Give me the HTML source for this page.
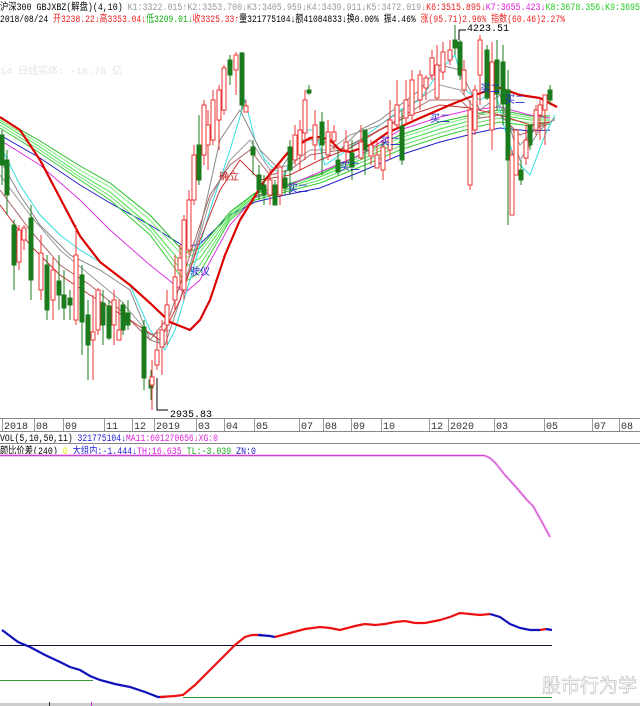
<!DOCTYPE html>
<html><head><meta charset="utf-8"><style>
html,body{margin:0;padding:0;background:#fff;width:640px;height:706px;overflow:hidden}
svg text{font-family:"Liberation Mono","Noto Sans CJK SC",monospace;font-size:10px}
</style></head><body>
<svg width="640" height="706" viewBox="0 0 640 706" xmlns="http://www.w3.org/2000/svg">
<rect width="640" height="706" fill="#fff"/>
<!-- header -->
<text x="0" y="10" fill="#000" textLength="640" lengthAdjust="spacingAndGlyphs">沪深300 GBJXBZ(解盘)(4,10) <tspan fill="#999">K1:3322.015↑K2:3353.700↓K3:3405.959↓K4:3439.911↓K5:3472.019↓</tspan><tspan fill="#e22">K6:3515.895↓</tspan><tspan fill="#d2d">K7:3655.423↓</tspan><tspan fill="#2c2">K8:3678.356↓K9:3695</tspan></text>
<text x="0" y="22" fill="#000" textLength="565" lengthAdjust="spacingAndGlyphs">2018/08/24 <tspan fill="#e22">开3238.22↓高3353.04↓</tspan><tspan fill="#1a1">低3209.01↓</tspan><tspan fill="#e22">收3325.33↑</tspan>量321775104↓额41084833↓换0.00% 振4.46% <tspan fill="#e22">涨(95.71)2.96% 指数(60.46)2.27%</tspan></text>
<text x="0" y="74" fill="#e4e4e4">14 日线实体: -18.78 亿</text>
<polyline points="459,40 459,30 466,30" fill="none" stroke="#000" stroke-width="1"/>
<text x="467" y="31" fill="#000">4223.51</text>
<polyline points="157,378 157,410 168,410" fill="none" stroke="#000"/>
<text x="170" y="417" fill="#000">2935.83</text>

<!-- ribbons -->
<g fill="none" stroke-width="1">
<polyline stroke="#22c" points="0,135 40,158 80,185 110,203 150,225 185,247 200,244 230,215 255,202 285,195 320,188 360,172 400,155 440,142 480,132 500,128 530,131 550,130"/>
<polyline stroke="#3c3" points="0,128 40,153 80,180 110,200 150,235 185,282 200,272 230,220 255,200 285,192 320,183 360,167 400,150 440,137 480,126 500,122 530,126 550,124"/>
<polyline stroke="#6d6" points="0,125 40,150 80,177 110,196 150,230 185,275 200,265 230,218 255,198 285,190 320,180 360,163 400,146 440,133 480,122 500,118 530,123 550,122"/>
<polyline stroke="#4d4" points="0,122 40,147 80,174 110,192 150,226 185,267 200,258 230,216 255,196 285,188 320,177 360,160 400,142 440,129 480,118 500,115 530,120 550,120"/>
<polyline stroke="#7e7" points="0,120 40,144 80,170 110,187 150,220 185,258 200,252 230,214 255,194 285,186 320,175 360,157 400,138 440,125 480,115 500,112 530,118 550,118"/>
<polyline stroke="#2b2" points="0,118 40,141 80,166 110,183 150,215 185,253 200,248 230,212 255,193 285,185 320,174 360,155 400,135 440,122 480,113 500,110 530,116 550,116"/>
<polyline stroke="#d3d" points="0,140 40,165 80,200 110,230 150,265 185,293 200,280 230,225 255,197 285,187 320,172 360,155 400,130 440,117 470,110 500,107 530,115 550,118"/>
<polyline stroke="#3dd" points="0,145 20,185 40,215 60,235 80,250 100,262 130,285 150,330 165,350 175,330 190,280 210,210 230,150 245,100 255,140 265,160 275,170 285,175 300,130 315,130 325,165 340,155 360,140 380,125 400,110 420,100 440,70 455,55 465,90 480,100 495,90 505,130 515,160 530,175 545,135 555,115"/>
<polyline stroke="#888" points="0,160 20,195 40,225 70,255 100,270 130,290 150,340 165,345 180,300 200,230 220,140 240,110 260,150 280,170 300,140 320,140 340,150 360,130 380,120 400,105 420,90 440,65 460,70 480,110 500,95 520,160 540,130 555,118"/>
<polyline stroke="#999" points="0,175 30,215 60,250 90,275 120,300 150,335 170,330 190,270 210,200 230,160 250,140 270,170 290,165 310,150 330,150 350,135 380,125 410,105 440,85 460,90 480,115 500,105 520,145 540,125 555,120"/>
<polyline stroke="#a66" points="0,190 30,230 60,265 90,285 120,310 150,340 170,315 190,255 210,195 230,165 250,150 270,175 290,170 310,155 340,150 370,135 400,118 430,100 460,100 480,118 500,115 520,135 545,125"/>
<polyline stroke="#c33" points="0,205 30,245 60,275 90,295 130,320 160,340 180,300 200,240 220,190 240,160 260,180 290,175 320,160 350,148 380,130 410,115 440,105 470,108 500,115 530,125 550,122"/>
<polyline stroke="#d00" stroke-width="2.2" points="0,117 20,130 40,160 60,198 80,236 100,262 130,285 150,303 170,322 190,330 200,320 210,300 225,255 240,220 265,180 290,150 310,138 320,137 330,140 340,150 350,152 370,145 387,133 420,118 450,105 470,97 497,87 520,95 540,98 557,107"/>
</g>

<g>
<g stroke="#1b7a1b" fill="#1b7a1b">
<line x1="2" y1="130" x2="2" y2="185"/><rect x="0" y="135" width="4" height="30"/>
<line x1="7" y1="150" x2="7" y2="215"/><rect x="5" y="160" width="4" height="35"/>
<line x1="14" y1="220" x2="14" y2="290"/><rect x="12" y="225" width="4" height="40"/>
<line x1="31" y1="205" x2="31" y2="300"/><rect x="29" y="218" width="4" height="62"/>
<line x1="47" y1="255" x2="47" y2="320"/><rect x="45" y="265" width="4" height="45"/>
<line x1="59" y1="255" x2="59" y2="310"/><rect x="57" y="281" width="4" height="14"/>
<line x1="64" y1="270" x2="64" y2="320"/><rect x="62" y="295" width="4" height="13"/>
<line x1="70" y1="290" x2="70" y2="320"/><rect x="68" y="298" width="4" height="7"/>
<line x1="82" y1="265" x2="82" y2="355"/><rect x="80" y="275" width="4" height="47"/>
<line x1="88" y1="300" x2="88" y2="380"/><rect x="86" y="315" width="4" height="30"/>
<line x1="103" y1="290" x2="103" y2="345"/><rect x="101" y="303" width="4" height="22"/>
<line x1="109" y1="300" x2="109" y2="340"/><rect x="107" y="306" width="4" height="32"/>
<line x1="123" y1="302" x2="123" y2="335"/><rect x="121" y="305" width="4" height="25"/>
<line x1="128" y1="300" x2="128" y2="330"/><rect x="126" y="313" width="4" height="12"/>
<line x1="144" y1="320" x2="144" y2="390"/><rect x="142" y="327" width="4" height="51"/>
<line x1="151" y1="370" x2="151" y2="400"/><rect x="149" y="380" width="4" height="8"/>
<line x1="199" y1="115" x2="199" y2="185"/><rect x="197" y="145" width="4" height="35"/>
<line x1="230" y1="55" x2="230" y2="85"/><rect x="228" y="60" width="4" height="15"/>
<line x1="242" y1="52" x2="242" y2="110"/><rect x="240" y="53" width="4" height="52"/>
<line x1="253" y1="140" x2="253" y2="175"/><rect x="251" y="147" width="4" height="8"/>
<line x1="259" y1="165" x2="259" y2="200"/><rect x="257" y="175" width="4" height="15"/>
<line x1="264" y1="175" x2="264" y2="205"/><rect x="262" y="185" width="4" height="10"/>
<line x1="275" y1="180" x2="275" y2="205"/><rect x="273" y="185" width="4" height="20"/>
<line x1="285" y1="170" x2="285" y2="195"/><rect x="283" y="178" width="4" height="10"/>
<line x1="290" y1="140" x2="290" y2="195"/><rect x="288" y="147" width="4" height="23"/>
<line x1="309" y1="85" x2="309" y2="95"/><rect x="307" y="90" width="4" height="3"/>
<line x1="322" y1="112" x2="322" y2="175"/><rect x="320" y="122" width="4" height="23"/>
<line x1="338" y1="150" x2="338" y2="175"/><rect x="336" y="160" width="4" height="12"/>
<line x1="352" y1="140" x2="352" y2="180"/><rect x="350" y="153" width="4" height="14"/>
<line x1="365" y1="130" x2="365" y2="175"/><rect x="363" y="130" width="4" height="20"/>
<line x1="402" y1="110" x2="402" y2="165"/><rect x="400" y="126" width="4" height="34"/>
<line x1="455" y1="25" x2="455" y2="55"/><rect x="453" y="40" width="4" height="8"/>
<line x1="460" y1="40" x2="460" y2="80"/><rect x="458" y="42" width="4" height="33"/>
<line x1="487" y1="45" x2="487" y2="100"/><rect x="485" y="50" width="4" height="48"/>
<line x1="497" y1="40" x2="497" y2="110"/><rect x="495" y="60" width="4" height="34"/>
<line x1="503" y1="45" x2="503" y2="125"/><rect x="501" y="62" width="4" height="42"/>
<line x1="508" y1="70" x2="508" y2="225"/><rect x="506" y="90" width="4" height="70"/>
<line x1="521" y1="160" x2="521" y2="185"/><rect x="519" y="170" width="4" height="10"/>
<line x1="530" y1="125" x2="530" y2="150"/><rect x="528" y="125" width="4" height="20"/>
<line x1="550" y1="85" x2="550" y2="105"/><rect x="548" y="90" width="4" height="10"/>
</g>
<g stroke="#e33" fill="#fff">
<line x1="19" y1="225" x2="19" y2="270"/><rect x="17" y="230" width="4" height="32"/>
<line x1="24" y1="225" x2="24" y2="250"/><rect x="22" y="228" width="4" height="12"/>
<line x1="41" y1="235" x2="41" y2="300"/><rect x="39" y="253" width="4" height="37"/>
<line x1="53" y1="258" x2="53" y2="320"/><rect x="51" y="270" width="4" height="30"/>
<line x1="76" y1="225" x2="76" y2="325"/><rect x="74" y="255" width="4" height="65"/>
<line x1="93" y1="295" x2="93" y2="380"/><rect x="91" y="332" width="4" height="8"/>
<line x1="98" y1="288" x2="98" y2="335"/><rect x="96" y="290" width="4" height="40"/>
<line x1="114" y1="290" x2="114" y2="345"/><rect x="112" y="300" width="4" height="25"/>
<line x1="119" y1="300" x2="119" y2="340"/><rect x="117" y="330" width="4" height="10"/>
<line x1="152" y1="360" x2="152" y2="410"/><rect x="150" y="377" width="4" height="8"/>
<line x1="157" y1="330" x2="157" y2="370"/><rect x="155" y="350" width="4" height="15"/>
<line x1="162" y1="320" x2="162" y2="375"/><rect x="160" y="330" width="4" height="17"/>
<line x1="167" y1="290" x2="167" y2="345"/><rect x="165" y="305" width="4" height="20"/>
<line x1="175" y1="255" x2="175" y2="310"/><rect x="173" y="277" width="4" height="23"/>
<line x1="180" y1="245" x2="180" y2="290"/><rect x="178" y="258" width="4" height="12"/>
<line x1="184" y1="215" x2="184" y2="300"/><rect x="182" y="220" width="4" height="70"/>
<line x1="189" y1="190" x2="189" y2="255"/><rect x="187" y="200" width="4" height="50"/>
<line x1="194" y1="145" x2="194" y2="205"/><rect x="192" y="155" width="4" height="45"/>
<line x1="204" y1="100" x2="204" y2="165"/><rect x="202" y="105" width="4" height="50"/>
<line x1="208" y1="110" x2="208" y2="170"/><rect x="206" y="125" width="4" height="20"/>
<line x1="213" y1="90" x2="213" y2="145"/><rect x="211" y="100" width="4" height="40"/>
<line x1="219" y1="85" x2="219" y2="150"/><rect x="217" y="90" width="4" height="30"/>
<line x1="224" y1="65" x2="224" y2="115"/><rect x="222" y="68" width="4" height="42"/>
<line x1="236" y1="52" x2="236" y2="95"/><rect x="234" y="55" width="4" height="15"/>
<line x1="246" y1="100" x2="246" y2="112"/><rect x="244" y="106" width="4" height="6"/>
<line x1="270" y1="170" x2="270" y2="205"/><rect x="268" y="180" width="4" height="15"/>
<line x1="280" y1="165" x2="280" y2="205"/><rect x="278" y="167" width="4" height="28"/>
<line x1="295" y1="125" x2="295" y2="165"/><rect x="293" y="135" width="4" height="25"/>
<line x1="300" y1="120" x2="300" y2="170"/><rect x="298" y="130" width="4" height="25"/>
<line x1="305" y1="90" x2="305" y2="160"/><rect x="303" y="100" width="4" height="33"/>
<line x1="315" y1="110" x2="315" y2="160"/><rect x="313" y="125" width="4" height="20"/>
<line x1="328" y1="120" x2="328" y2="160"/><rect x="326" y="132" width="4" height="23"/>
<line x1="334" y1="125" x2="334" y2="150"/><rect x="332" y="132" width="4" height="9"/>
<line x1="346" y1="130" x2="346" y2="165"/><rect x="344" y="142" width="4" height="8"/>
<line x1="361" y1="125" x2="361" y2="160"/><rect x="359" y="142" width="4" height="16"/>
<line x1="371" y1="140" x2="371" y2="165"/><rect x="369" y="145" width="4" height="11"/>
<line x1="377" y1="140" x2="377" y2="168"/><rect x="375" y="155" width="4" height="13"/>
<line x1="383" y1="140" x2="383" y2="180"/><rect x="381" y="147" width="4" height="23"/>
<line x1="390" y1="100" x2="390" y2="160"/><rect x="388" y="120" width="4" height="30"/>
<line x1="397" y1="80" x2="397" y2="130"/><rect x="395" y="105" width="4" height="20"/>
<line x1="406" y1="80" x2="406" y2="125"/><rect x="404" y="100" width="4" height="18"/>
<line x1="412" y1="70" x2="412" y2="120"/><rect x="410" y="80" width="4" height="35"/>
<line x1="420" y1="70" x2="420" y2="110"/><rect x="418" y="75" width="4" height="25"/>
<line x1="426" y1="75" x2="426" y2="100"/><rect x="424" y="78" width="4" height="10"/>
<line x1="432" y1="50" x2="432" y2="80"/><rect x="430" y="58" width="4" height="17"/>
<line x1="437" y1="45" x2="437" y2="100"/><rect x="435" y="65" width="4" height="33"/>
<line x1="443" y1="42" x2="443" y2="80"/><rect x="441" y="52" width="4" height="20"/>
<line x1="450" y1="40" x2="450" y2="65"/><rect x="448" y="50" width="4" height="10"/>
<line x1="464" y1="60" x2="464" y2="95"/><rect x="462" y="70" width="4" height="20"/>
<line x1="470" y1="100" x2="470" y2="190"/><rect x="468" y="110" width="4" height="75"/>
<line x1="475" y1="85" x2="475" y2="135"/><rect x="473" y="90" width="4" height="40"/>
<line x1="480" y1="35" x2="480" y2="105"/><rect x="478" y="40" width="4" height="35"/>
<line x1="492" y1="42" x2="492" y2="150"/><rect x="490" y="62" width="4" height="68"/>
<line x1="512" y1="150" x2="512" y2="215"/><rect x="510" y="155" width="4" height="60"/>
<line x1="516" y1="130" x2="516" y2="175"/><rect x="514" y="130" width="4" height="45"/>
<line x1="526" y1="125" x2="526" y2="165"/><rect x="524" y="140" width="4" height="18"/>
<line x1="536" y1="105" x2="536" y2="135"/><rect x="534" y="110" width="4" height="20"/>
<line x1="540" y1="98" x2="540" y2="140"/><rect x="538" y="105" width="4" height="10"/>
<line x1="545" y1="95" x2="545" y2="145"/><rect x="543" y="95" width="4" height="15"/>
</g>
</g>
<g fill="#22c">
<text x="190" y="275" font-size="11">驶仪</text>
<text x="288" y="192">买二</text>
<text x="340" y="170">买二</text>
<text x="380" y="145">买二</text>
<text x="430" y="122">买二</text>
<text x="480" y="92">买二</text>
<text x="505" y="103">买二</text>
</g>
<text x="219" y="180" fill="#c22">确立</text>

<line x1="0" y1="418.5" x2="640" y2="418.5" stroke="#888"/>
<line x1="0" y1="431.5" x2="640" y2="431.5" stroke="#888"/>
<g stroke="#999">
<line x1="2.5" y1="419" x2="2.5" y2="431"/><line x1="34.5" y1="419" x2="34.5" y2="431"/><line x1="63.5" y1="419" x2="63.5" y2="431"/><line x1="104.5" y1="419" x2="104.5" y2="431"/><line x1="132.5" y1="419" x2="132.5" y2="431"/><line x1="154.5" y1="419" x2="154.5" y2="431"/><line x1="196.5" y1="419" x2="196.5" y2="431"/><line x1="224.5" y1="419" x2="224.5" y2="431"/><line x1="254.5" y1="419" x2="254.5" y2="431"/><line x1="299.5" y1="419" x2="299.5" y2="431"/><line x1="323.5" y1="419" x2="323.5" y2="431"/><line x1="351.5" y1="419" x2="351.5" y2="431"/><line x1="381.5" y1="419" x2="381.5" y2="431"/><line x1="429.5" y1="419" x2="429.5" y2="431"/><line x1="448.5" y1="419" x2="448.5" y2="431"/><line x1="494.5" y1="419" x2="494.5" y2="431"/><line x1="544.5" y1="419" x2="544.5" y2="431"/><line x1="592.5" y1="419" x2="592.5" y2="431"/><line x1="619.5" y1="419" x2="619.5" y2="431"/>
</g>
<g fill="#333" font-size="9">
<text x="4" y="429">2018</text><text x="36" y="429">08</text><text x="65" y="429">09</text><text x="106" y="429">11</text><text x="134" y="429">12</text><text x="156" y="429">2019</text><text x="198" y="429">03</text><text x="226" y="429">04</text><text x="256" y="429">05</text><text x="301" y="429">07</text><text x="325" y="429">08</text><text x="353" y="429">09</text><text x="383" y="429">10</text><text x="431" y="429">12</text><text x="450" y="429">2020</text><text x="496" y="429">03</text><text x="546" y="429">05</text><text x="594" y="429">07</text><text x="621" y="429">08</text>
</g>
<text x="0" y="441" fill="#000" textLength="218" lengthAdjust="spacingAndGlyphs">VOL(5,10,50,11) <tspan fill="#22c">321775104↓</tspan><tspan fill="#d2d">MA11:601270656↓</tspan><tspan fill="#d2d">XG:0</tspan></text>
<line x1="0" y1="443.5" x2="640" y2="443.5" stroke="#888"/>
<text x="0" y="454" fill="#000" textLength="256" lengthAdjust="spacingAndGlyphs">颜比价差(240) <tspan fill="#ee0">0</tspan> <tspan fill="#22c">大组内:-1.444↓</tspan><tspan fill="#d2d">TH:16.635</tspan> <tspan fill="#1a1">TL:-3.039</tspan> <tspan fill="#22c">ZN:0</tspan></text>
<path d="M0,455.5 L483,455.5 Q490,456 497,465 L505,475 L515,486 L527,500 L533,506 L542,522 L550,537" fill="none" stroke="#f6c6f6" stroke-width="3"/>
<path d="M0,455.5 L483,455.5 Q490,456 497,465 L505,475 L515,486 L527,500 L533,506 L542,522 L550,537" fill="none" stroke="#c4c" stroke-width="1"/>

<line x1="0" y1="645.5" x2="552" y2="645.5" stroke="#113"/>
<line x1="0" y1="680.5" x2="93" y2="680.5" stroke="#393"/>
<line x1="183" y1="697.5" x2="552" y2="697.5" stroke="#393"/>
<polyline fill="none" stroke="#11b" stroke-width="2.2" points="2,630 18,642 30,647 45,655 60,662 70,667 80,670 90,676 100,680 115,684 130,687 145,692 158,697 165,697"/>
<polyline fill="none" stroke="#e11" stroke-width="2.2" points="160,697 175,696 183,695 195,685 210,670 225,655 235,645 245,637 252,635 262,635"/>
<polyline fill="none" stroke="#11b" stroke-width="2.2" points="258,635 270,636 275,637"/>
<polyline fill="none" stroke="#e11" stroke-width="2.2" points="275,637 290,633 305,629 320,627 330,628 340,630 355,626 365,624 375,625 385,624 395,622 405,621 415,623 425,623 440,620 450,617 460,613 470,614 480,615 490,614"/>
<polyline fill="none" stroke="#11b" stroke-width="2.2" points="490,614 500,617 510,624 520,628 530,630 540,630"/>
<polyline fill="none" stroke="#e11" stroke-width="2.2" points="540,630 546,629"/>
<polyline fill="none" stroke="#11b" stroke-width="2.2" points="546,629 552,630"/>
<rect x="0" y="703" width="640" height="3" fill="#ccc"/>
<line x1="49.5" y1="702" x2="49.5" y2="706" stroke="#333"/>
<line x1="91.5" y1="702" x2="91.5" y2="706" stroke="#c3c"/>
<text x="542" y="692" fill="#fff" stroke="#bbb" stroke-width="0.6" style="font-family:'Noto Sans CJK SC',sans-serif;font-size:19px">股市行为学</text>
</svg>
</body></html>
